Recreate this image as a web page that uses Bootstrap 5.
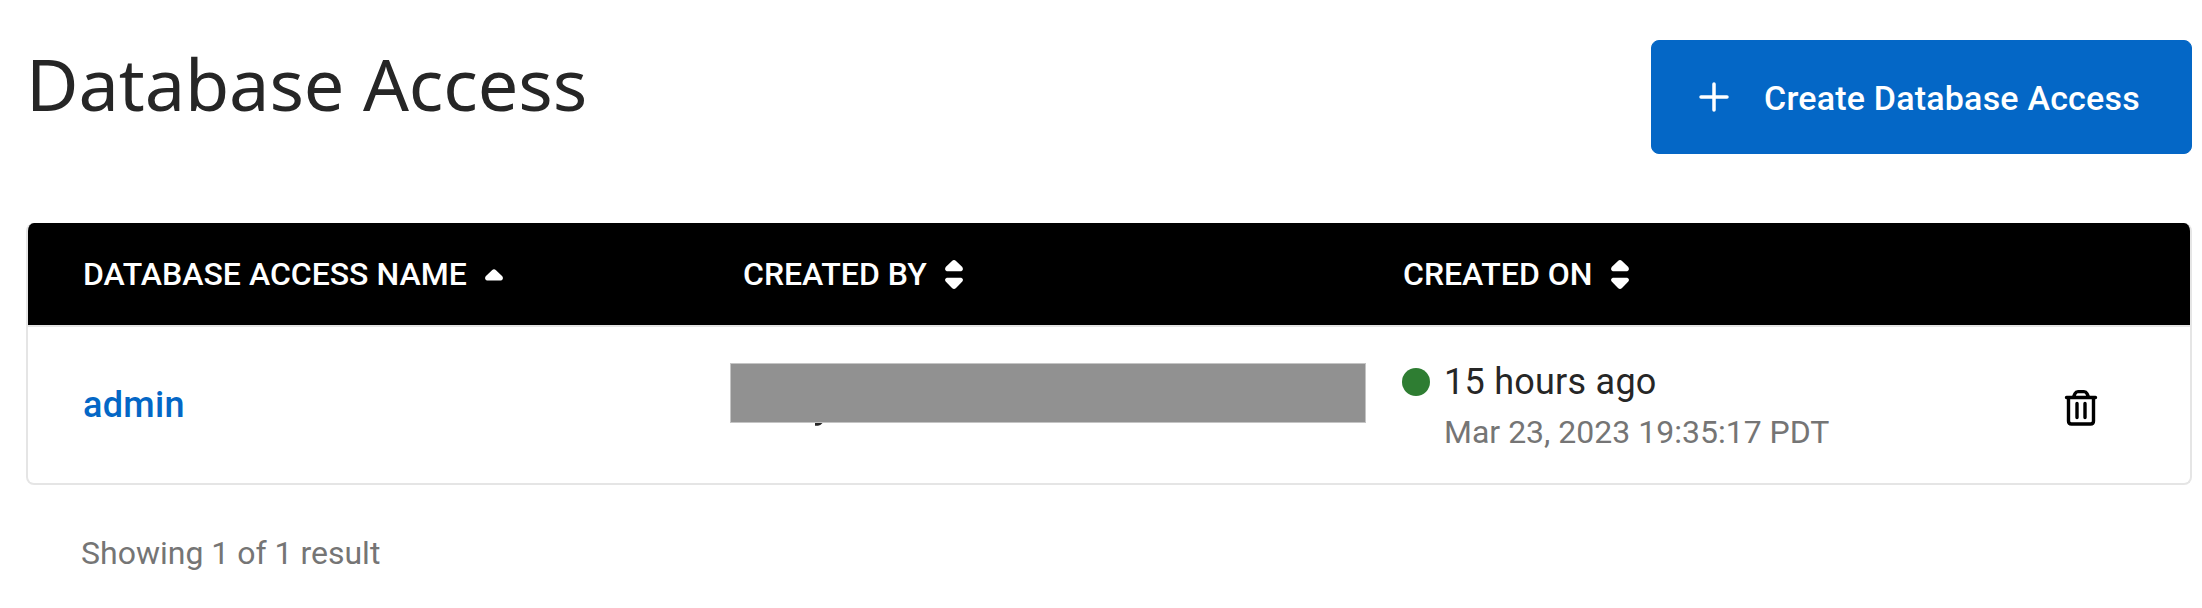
<!DOCTYPE html>
<html lang="en">
<head>
<meta charset="utf-8">
<meta name="viewport" content="width=device-width, initial-scale=1">
<title>Database Access</title>
<link href="https://cdn.jsdelivr.net/npm/bootstrap@5.3.0/dist/css/bootstrap.min.css" rel="stylesheet">
<style>
body{font-family:Roboto,"Liberation Sans",sans-serif;color:#262626;background:#fff;overflow:hidden}
.page{padding:40px 10px 0 26px}
.page-title{font-family:"Noto Sans","Open Sans",sans-serif;font-size:72px;line-height:86px;font-weight:400;letter-spacing:-.1px;margin:0}
.btn-create{--bs-btn-color:#fff;--bs-btn-bg:#0467c6;--bs-btn-border-color:#0467c6;--bs-btn-hover-color:#fff;--bs-btn-hover-bg:#0457a8;width:541px;height:114px;border-radius:8px;font-size:34px;font-weight:500;line-height:40px;padding:0 0 0 45px}
.create-label{margin:2px 0 0 33px;letter-spacing:.2px}
.access-panel{margin-top:69px;border:2px solid #e5e5e5;border-top:0;border-radius:8px;height:262px}
.access-table{table-layout:fixed;--bs-table-bg:transparent;color:#262626;margin:0;height:260px}
.access-table th,.access-table td{padding:0 0 0 55px;border:0;vertical-align:middle}
.access-table th{height:102px;background:#000;color:#fff;font-size:32px;font-weight:500;line-height:40px;white-space:nowrap}
.access-table td{height:158px;padding-top:1px;box-shadow:inset 0 2px #e5e5e5}
.col-text{width:660px}
.col-action{width:182px}
.sort{margin:2px 0 0 17px}
.name-link{font-size:36px;font-weight:500;line-height:44px;letter-spacing:.3px;color:#0467c6;text-decoration:none}
.redacted{width:636px;height:60px;margin:-24px 0 0 -13px;background:#919191;border:1px solid #c4c4c4}
.owner .tail{margin:0 0 -4px 72px}
.created{margin-top:2px}
.status-dot{width:28px;height:28px;background:#2e7d32;margin:8px 0 0 -1px}
.times{margin-left:14px}
.ago{font-size:36px;line-height:44px;letter-spacing:.25px}
.stamp{font-size:32px;line-height:40px;color:#757575;margin-top:8px}
.trash{margin:7px 0 0 1px}
.result-count{font-size:32px;line-height:40px;color:#757575;margin:48px 0 0 55px}
svg{display:block;flex:none}
</style>
</head>
<body>
<main class="page">
  <header class="d-flex justify-content-between align-items-start">
    <h1 class="page-title">Database Access</h1>
    <button type="button" class="btn btn-create d-flex align-items-center">
      <svg width="34" height="34" viewBox="0 0 34 34" fill="none" stroke="#fff" stroke-width="3.500" stroke-linecap="round"><path d="M17 4v26M4 17h26"/></svg>
      <span class="create-label">Create Database Access</span>
    </button>
  </header>

  <section class="access-panel overflow-hidden">
    <table class="table access-table">
      <colgroup><col class="col-text"><col class="col-text"><col><col class="col-action"></colgroup>
      <thead>
        <tr>
          <th><div class="d-flex align-items-center"><span>DATABASE ACCESS NAME</span>
            <svg class="sort" width="20" height="32" viewBox="0 0 20 32" fill="#fff"><path d="M8 11.2Q10 9.200 12 11.200L18.300 17.200Q20 20 17.200 21.500H2.800Q0 20 1.700 17.200Z"/></svg></div></th>
          <th><div class="d-flex align-items-center"><span>CREATED BY</span>
            <svg class="sort" width="20" height="32" viewBox="0 0 20 32" fill="#fff"><path d="M8 2Q10 0 12 2L18.300 8Q20 11 17.200 12.300H2.800Q0 11 1.700 8Z"/><path d="M8 29Q10 31 12 29L18.300 22.500Q20 20 17.200 18.700H2.800Q0 20 1.700 22.500Z"/></svg></div></th>
          <th><div class="d-flex align-items-center"><span>CREATED ON</span>
            <svg class="sort" width="20" height="32" viewBox="0 0 20 32" fill="#fff"><path d="M8 2Q10 0 12 2L18.300 8Q20 11 17.200 12.300H2.800Q0 11 1.700 8Z"/><path d="M8 29Q10 31 12 29L18.300 22.500Q20 20 17.200 18.700H2.800Q0 20 1.700 22.500Z"/></svg></div></th>
          <th></th>
        </tr>
      </thead>
      <tbody>
        <tr>
          <td><a href="#" class="name-link">admin</a></td>
          <td class="owner"><div class="redacted"></div>
            <svg class="tail" width="8" height="4" viewBox="0 0 8 4"><path d="M0 0H7.500Q5.500 2.500 3 2.800H0Z" fill="#262626"/></svg></td>
          <td><div class="d-flex created"><span class="status-dot rounded-circle flex-shrink-0"></span>
            <div class="times"><div class="ago">15 hours ago</div><div class="stamp">Mar 23, 2023 19:35:17 PDT</div></div></div></td>
          <td><svg class="trash" width="34" height="38" viewBox="0 0 34 38" fill="none" stroke="#000" stroke-width="3.400" stroke-linecap="round" stroke-linejoin="round"><path d="M2.500 8.500h29M4.500 8.500v23.500q0 3 3 3h19q3 0 3-3V8.500M9.500 8l1.600-3.600q.9-1.800 2.900-1.800h6q2 0 2.900 1.800L24.500 8M13 14.500v14M21 14.500v14"/></svg></td>
        </tr>
      </tbody>
    </table>
  </section>
  <p class="result-count">Showing 1 of 1 result</p>
</main>
<script src="https://cdn.jsdelivr.net/npm/bootstrap@5.3.0/dist/js/bootstrap.bundle.min.js"></script>
</body>
</html>
